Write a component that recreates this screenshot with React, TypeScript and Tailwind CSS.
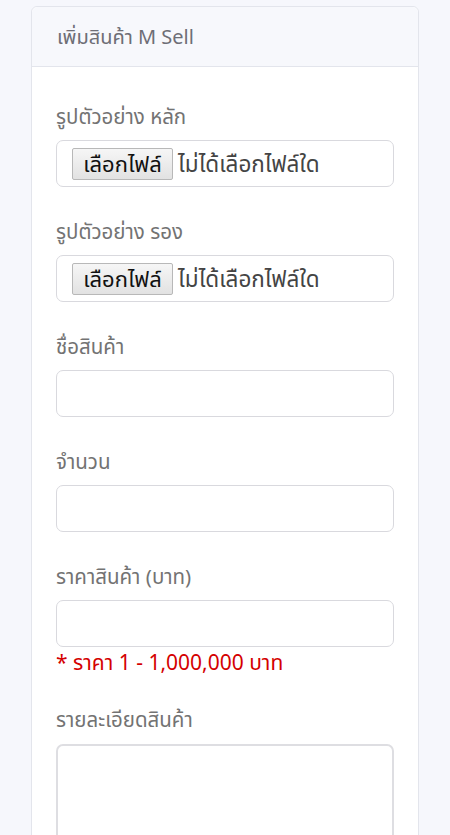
import React from "react";

const font = { fontFamily: '"Noto Sans", "Noto Sans Thai", "Open Sans", sans-serif' };

function Label({ children }: { children: React.ReactNode }) {
  return <div className="text-[20.5px] leading-[24px] text-[#737373]">{children}</div>;
}

function FileInput() {
  return (
    <div className="mt-[12px] h-[47px] rounded-[7px] border border-[#d9d9de] bg-white flex items-center pl-[15px]">
      <div className="h-[32px] w-[101px] justify-center flex items-center border border-[#b8b8b8] rounded-[2px] bg-gradient-to-b from-[#f6f6f6] to-[#e2e2e2] text-[22px] text-[#111]">
        เลือกไฟล์
      </div>
      <div className="ml-[5px] text-[22.5px] text-[#444]">ไม่ได้เลือกไฟล์ใด</div>
    </div>
  );
}

function TextInput() {
  return <div className="mt-[12px] h-[47px] rounded-[7px] border border-[#d9d9de] bg-white" />;
}

export default function App() {
  return (
    <div className="min-h-[835px] bg-[#f6f7fc] pt-[6px] px-[31px] overflow-hidden" style={font}>
      <div className="rounded-t-[6px] border border-[#e3e5ec] bg-white h-[840px]">
        <div className="h-[60px] bg-[#f7f8fc] border-b border-[#e3e5ec] rounded-t-[6px] flex items-center px-[25px] text-[20px] text-[#6e6e76]">
          เพิ่มสินค้า M Sell
        </div>
        <div className="px-[24px] pt-[37px]">
          <Label>รูปตัวอย่าง หลัก</Label>
          <FileInput />
          <div className="h-[32px]" />
          <Label>รูปตัวอย่าง รอง</Label>
          <FileInput />
          <div className="h-[32px]" />
          <Label>ชื่อสินค้า</Label>
          <TextInput />
          <div className="h-[32px]" />
          <Label>จำนวน</Label>
          <TextInput />
          <div className="h-[32px]" />
          <Label>ราคาสินค้า (บาท)</Label>
          <TextInput />
          <div className="mt-[3px] text-[21px] leading-[24px] text-[#d40000]">* ราคา 1 - 1,000,000 บาท</div>
          <div className="h-[33px]" />
          <Label>รายละเอียดสินค้า</Label>
          <div className="mt-[13px] h-[120px] rounded-[7px] border-2 border-[#dedee2] bg-white" />
        </div>
      </div>
    </div>
  );
}
